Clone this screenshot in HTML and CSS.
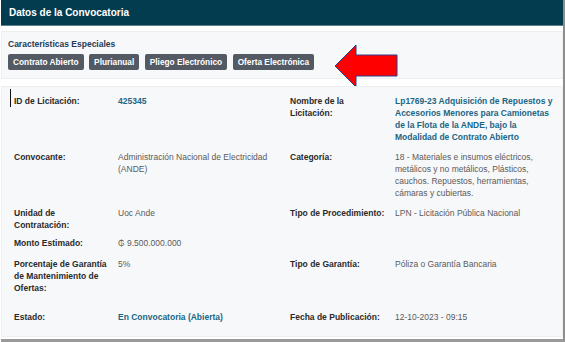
FILE: index.html
```html
<!DOCTYPE html>
<html lang="es">
<head>
  <meta charset="UTF-8">
  <title>Datos de la Convocatoria</title>
  <link rel="stylesheet" href="styles.css">
</head>
<body>

  <div class="card">
    <div class="card-header">Datos de la Convocatoria</div>

    <div class="panel panel-features">
      <div class="features-title">Características Especiales</div>
      <div class="badges">
        <span class="badge">Contrato Abierto</span>
        <span class="badge">Plurianual</span>
        <span class="badge">Pliego Electrónico</span>
        <span class="badge">Oferta Electrónica</span>
      </div>
      <!-- flecha de señalamiento -->
      <svg class="pointer-arrow" width="64" height="46" viewBox="0 0 64 46">
        <polygon points="1,22 22,1 22,11 63,11 63,32 22,32 22,43" fill="#ff0000" stroke="#2b3f8c" stroke-width="1"/>
      </svg>
    </div>

    <div class="panel panel-data">
      <span class="cursor"></span>

      <div class="row">
        <div class="label">ID de Licitación:</div>
        <div class="value link">425345</div>
        <div class="label">Nombre de la Licitación:</div>
        <div class="value link">Lp1769-23 Adquisición de Repuestos y Accesorios Menores para Camionetas de la Flota de la ANDE, bajo la Modalidad de Contrato Abierto</div>
      </div>

      <div class="row">
        <div class="label">Convocante:</div>
        <div class="value">Administración Nacional de Electricidad (ANDE)</div>
        <div class="label">Categoría:</div>
        <div class="value">18 - Materiales e insumos eléctricos, metálicos y no metálicos, Plásticos, cauchos. Repuestos, herramientas, cámaras y cubiertas.</div>
      </div>

      <div class="row row-tight">
        <div class="label">Unidad de Contratación:</div>
        <div class="value">Uoc Ande</div>
        <div class="label">Tipo de Procedimiento:</div>
        <div class="value">LPN - Licitación Pública Nacional</div>
      </div>

      <div class="row row-single">
        <div class="label">Monto Estimado:</div>
        <div class="value">₲ 9.500.000.000</div>
        <div class="label"></div>
        <div class="value"></div>
      </div>

      <div class="row row-wide">
        <div class="label">Porcentaje de Garantía de Mantenimiento de Ofertas:</div>
        <div class="value">5%</div>
        <div class="label">Tipo de Garantía:</div>
        <div class="value">Póliza o Garantía Bancaria</div>
      </div>

      <div class="row row-last">
        <div class="label">Estado:</div>
        <div class="value link">En Convocatoria (Abierta)</div>
        <div class="label">Fecha de Publicación:</div>
        <div class="value">12-10-2023 - 09:15</div>
      </div>
    </div>
  </div>

</body>
</html>
```

FILE: styles.css
```css
body {
  margin: 0;
  font-family: "Liberation Sans", Arial, sans-serif;
  background-color: #fff;
}
.card {
  width: 562px;
  height: 339px;
  margin-left: 1px;
  border-right: 2px solid #8e8e8e;
  border-bottom: 3px solid #9a9a9a;
  background-color: #fff;
}
.card-header {
  height: 25px;
  line-height: 25px;
  padding-left: 8px;
  background-color: #033b4f;
  border-bottom: 1px solid #5f7f8c;
  color: #fff;
  font-size: 10px;
  font-weight: bold;
}
.panel {
  position: relative;
  background-color: #f7f8fa;
  border: 1px solid #eceef1;
}
.panel-features {
  margin-top: 5px;
  height: 48px;
  padding: 5px 7px 0 6px;
  box-sizing: border-box;
}
.features-title {
  font-size: 8.5px;
  font-weight: bold;
  line-height: 14px;
  color: #1f3a56;
}
.badges {
  display: flex;
  gap: 5.5px;
  margin-top: 3px;
}
.badge {
  height: 16px;
  line-height: 16px;
  padding: 0 5px;
  border-radius: 2px;
  background-color: #535a63;
  color: #fff;
  font-size: 8.3px;
  font-weight: bold;
}
.pointer-arrow {
  position: absolute;
  left: 332px;
  top: 12px;
}
.panel-data {
  margin-top: 7px;
  height: 251px;
  padding: 8px 4px 0 12px;
  box-sizing: border-box;
  font-size: 8.5px;
  line-height: 12px;
}
.cursor {
  position: absolute;
  left: 8px;
  top: 2px;
  width: 1px;
  height: 18px;
  background-color: #111;
}
.row {
  display: grid;
  grid-template-columns: 104px 172px 105px 1fr;
  margin-bottom: 8px;
}
.row-tight {
  margin-bottom: 6px;
}
.row-single {
  margin-bottom: 9px;
}
.row-wide {
  margin-bottom: 17px;
}
.row-last {
  margin-bottom: 0;
}
.label {
  padding-right: 8px;
  font-weight: bold;
  color: #2a2a2a;
}
.value {
  color: #5a5a5a;
}
.value.link {
  font-weight: bold;
  color: #1b6685;
}
```
